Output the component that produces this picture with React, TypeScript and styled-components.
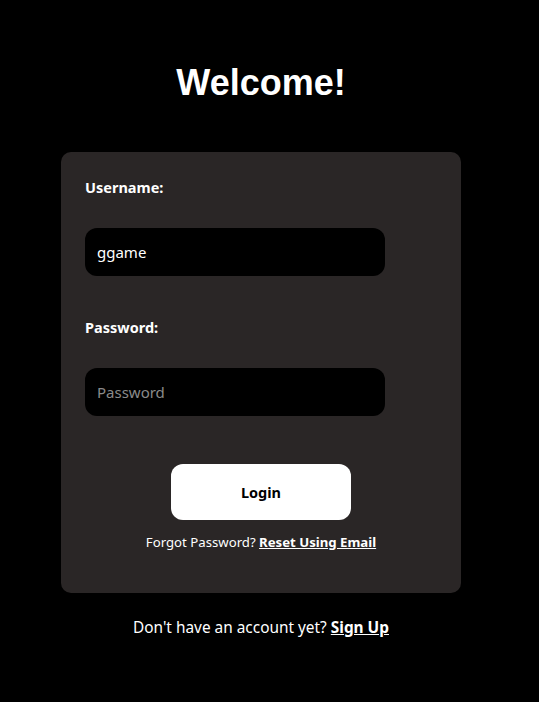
import React from "react";
import styled, { createGlobalStyle } from "styled-components";

const Global = createGlobalStyle`
  html, body { margin: 0; padding: 0; background: #000; }
  body { font-family: "Noto Sans", "Open Sans", sans-serif; color: #fff; }
  * { box-sizing: border-box; }
`;

const Page = styled.main`
  width: 522px;
  min-height: 702px;
  display: flex;
  flex-direction: column;
  align-items: center;
  padding-top: 62px;
`;

const Title = styled.h1`
  margin: 0 0 49px;
  font-family: "Liberation Sans", Arial, sans-serif;
  font-weight: 700;
  font-size: 36px;
  line-height: 41px;
  color: #fff;
`;

const Card = styled.form`
  width: 400px;
  background: #2a2626;
  border-radius: 10px;
  padding: 26px 24px 42px;
  display: flex;
  flex-direction: column;
`;

const Label = styled.label<{ $gap: number }>`
  font-size: 14.5px;
  font-weight: 700;
  line-height: 19px;
  margin-bottom: ${(p) => p.$gap}px;
`;

const Input = styled.input<{ $after: number }>`
  width: 300px;
  height: 48px;
  background: #000;
  border: none;
  border-radius: 12px;
  padding: 0 12px;
  color: #fff;
  font-family: "Noto Sans", sans-serif;
  font-size: 15px;
  outline: none;
  margin-bottom: ${(p) => p.$after}px;
  &::placeholder { color: #8a8a8a; }
`;

const Button = styled.button`
  align-self: center;
  width: 180px;
  height: 56px;
  margin-top: 6px;
  margin-bottom: 13px;
  border: none;
  border-radius: 12px;
  background: #fff;
  color: #000;
  font-family: "Noto Sans", sans-serif;
  font-weight: 700;
  font-size: 14.5px;
`;

const Note = styled.p<{ $size: number }>`
  margin: 0;
  text-align: center;
  font-size: ${(p) => p.$size}px;
  line-height: ${(p) => Math.round(p.$size * 1.35)}px;
  color: #fff;
`;

const Link = styled.a`
  color: #fff;
  font-weight: 700;
  text-decoration: underline;
`;

const Footer = styled.div`
  margin-top: 24px;
`;

export default function App() {
  return (
    <>
      <Global />
      <Page>
        <Title>Welcome!</Title>
        <Card onSubmit={(e) => e.preventDefault()}>
          <Label $gap={31}>Username:</Label>
          <Input $after={42} defaultValue="ggame" />
          <Label $gap={31}>Password:</Label>
          <Input $after={42} type="password" placeholder="Password" />
          <Button type="submit">Login</Button>
          <Note $size={13.2}>
            Forgot Password? <Link href="#">Reset Using Email</Link>
          </Note>
        </Card>
        <Footer>
          <Note $size={15.4}>
            Don't have an account yet? <Link href="#">Sign Up</Link>
          </Note>
        </Footer>
      </Page>
    </>
  );
}
